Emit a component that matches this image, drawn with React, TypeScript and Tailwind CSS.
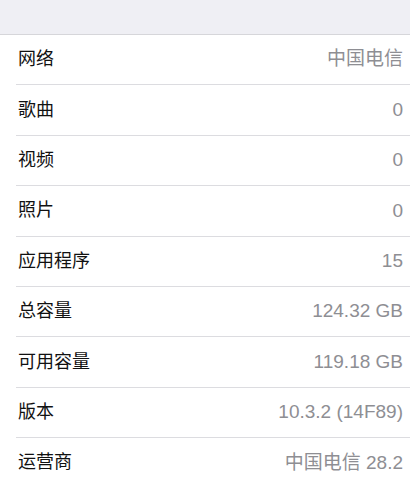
import React from 'react';

const rows: [string, string][] = [
  ['网络', '中国电信'],
  ['歌曲', '0'],
  ['视频', '0'],
  ['照片', '0'],
  ['应用程序', '15'],
  ['总容量', '124.32 GB'],
  ['可用容量', '119.18 GB'],
  ['版本', '10.3.2 (14F89)'],
  ['运营商', '中国电信 28.2'],
];

export default function App() {
  return (
    <div
      className="w-[410px] h-[488px] overflow-hidden bg-white"
      style={{ fontFamily: '"Liberation Sans", "Noto Sans CJK SC", sans-serif' }}
    >
      <div className="h-[35px] bg-[#efeff4] border-b border-[#d6d6da]" />
      <div className="pl-4">
        {rows.map(([label, value]) => (
          <div
            key={label}
            className="h-[50.4px] flex items-center justify-between pr-[7px] border-b border-[#dcdce0]"
          >
            <span className="pl-[2px] text-[18px] text-[#111]">{label}</span>
            <span className="text-[19px] text-[#8e8e93]">{value}</span>
          </div>
        ))}
      </div>
    </div>
  );
}
